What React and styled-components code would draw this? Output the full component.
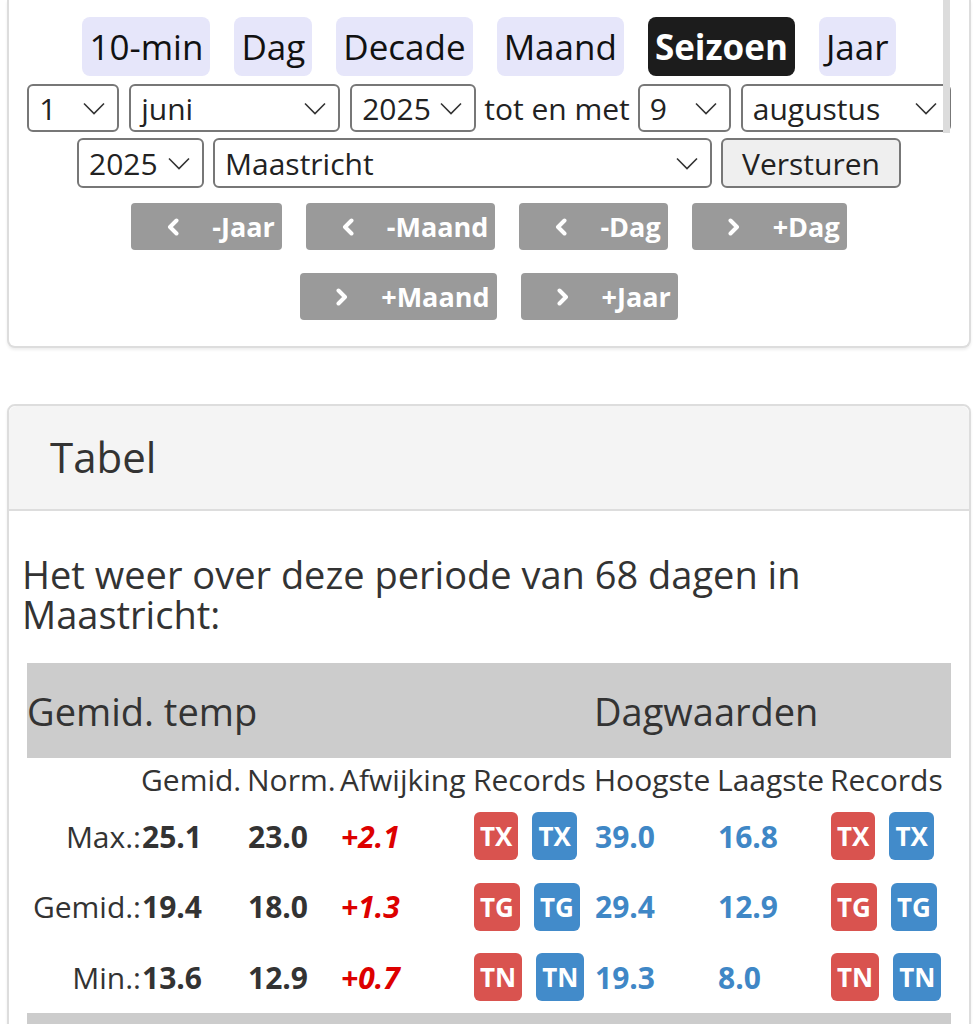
import React from "react";
import styled, { createGlobalStyle } from "styled-components";

const Global = createGlobalStyle`
  html, body { margin: 0; padding: 0; background: #fff; }
  body { font-family: "Open Sans", "Noto Sans", sans-serif; color: #333; }
  * { box-sizing: border-box; }
`;

const Page = styled.div`
  padding: 0 7px;
  display: flex;
  flex-direction: column;
  gap: 56px;
`;

const Card = styled.div`
  position: relative;
  border: 2px solid #ddd;
  border-radius: 8px;
  background: #fff;
  box-shadow: 0 2px 3px rgba(0, 0, 0, 0.07);
  ${(p) => p.$clipTop && `border-top: none; border-radius: 0 0 8px 8px;`}
`;

const Controls = styled.div`
  display: flex;
  flex-direction: column;
  align-items: center;
  padding: 17px 0 26px;
`;

const TabRow = styled.div`
  display: flex;
  justify-content: center;
  gap: 24px;
  height: 59px;
`;

const Tab = styled.span`
  display: flex;
  align-items: center;
  padding: 0 7px;
  border-radius: 8px;
  font-size: 35px;
  background: ${(p) => (p.$active ? "#1c1c1c" : "#e6e6fa")};
  color: ${(p) => (p.$active ? "#fff" : "#111")};
  font-weight: ${(p) => (p.$active ? 700 : 400)};
`;

const FormRow = styled.div`
  display: flex;
  justify-content: center;
  align-items: center;
  gap: ${(p) => p.$gap || 10}px;
  margin-top: ${(p) => p.$mt || 0}px;
  height: ${(p) => p.$h}px;
  width: 100%;
`;

const SelectBox = styled.div`
  flex: none;
  width: ${(p) => p.$w}px;
  height: 100%;
  display: flex;
  align-items: center;
  justify-content: space-between;
  padding: 0 12px 0 10px;
  border: 2px solid #777;
  border-radius: 6px;
  background: #fff;
  font-size: 30px;
  color: #222;
`;

const Between = styled.span`
  font-size: 30px;
  color: #222;
  margin: 0 -2px;
`;

const SubmitButton = styled.div`
  flex: none;
  height: 100%;
  display: flex;
  align-items: center;
  padding: 0 19px;
  border: 2px solid #777;
  border-radius: 6px;
  background: #efefef;
  font-size: 30px;
  color: #222;
`;

const NavRow = styled.div`
  display: flex;
  justify-content: center;
  gap: 24px;
  height: 47px;
  margin-top: ${(p) => p.$mt}px;
`;

const NavButton = styled.div`
  display: flex;
  align-items: center;
  gap: 33px;
  padding: 0 7px 0 36px;
  background: #9a9a9a;
  border-radius: 4px;
  color: #fff;
  font-weight: 700;
  font-size: 27px;
`;

const ScrollThumb = styled.div`
  position: absolute;
  top: 0;
  left: 934px;
  width: 7px;
  height: 133px;
  background: #dcdcdc;
`;

const CardHeader = styled.div`
  background: #f4f4f4;
  border-bottom: 2px solid #ddd;
  border-radius: 8px 8px 0 0;
  padding: 23px 41px 24px;
  font-size: 42px;
  line-height: 56px;
  color: #333;
`;

const CardBody = styled.div`
  padding: 43px 13px 0;
`;

const Intro = styled.p`
  margin: 0 0 29px;
  font-size: 38px;
  line-height: 40px;
  color: #333;
`;

const Table = styled.div`
  margin: 0 5px;
  display: grid;
  grid-template-columns: 114px 106px 93px 133px 121px 123px 113px 1fr;
`;

const GroupHead = styled.div`
  grid-column: ${(p) => p.$col};
  background: #ccc;
  height: 95px;
  display: flex;
  align-items: center;
  font-size: 38px;
  color: #333;
`;

const ColHead = styled.div`
  height: 43px;
  display: flex;
  align-items: center;
  padding-left: 0;
  font-size: 30px;
  color: #333;
  white-space: nowrap;
`;

const Cell = styled.div`
  height: 70.5px;
  display: flex;
  align-items: center;
  justify-content: ${(p) => (p.$right ? "flex-end" : "flex-start")};
  gap: 14px;
  padding: 0 0 0 ${(p) => (p.$right ? 0 : 1)}px;
  font-size: 30px;
  color: ${(p) => p.$color || "#333"};
  font-weight: ${(p) => (p.$bold ? 700 : 400)};
  font-style: ${(p) => (p.$italic ? "italic" : "normal")};
  white-space: nowrap;
`;

const Badge = styled.span`
  display: inline-flex;
  align-items: center;
  height: 48px;
  padding: 0 6px;
  border-radius: 6px;
  background: ${(p) => (p.$kind === "warm" ? "#d9534f" : "#428bca")};
  color: #fff;
  font-weight: 700;
  font-size: 26px;
`;

const Chevron = () => (
  <svg width="22" height="13" viewBox="0 0 22 13" fill="none">
    <polyline points="1,1.5 11,11.5 21,1.5" stroke="#333" strokeWidth="1.6" />
  </svg>
);

const NavChevron = ({ dir }) => (
  <svg width="12" height="18" viewBox="0 0 12 18" fill="none">
    <polyline
      points={dir === "left" ? "9.5,2.5 3,9 9.5,15.5" : "2.5,2.5 9,9 2.5,15.5"}
      stroke="#fff"
      strokeWidth="4"
      strokeLinecap="round"
      strokeLinejoin="round"
    />
  </svg>
);

const Select = ({ w, children }) => (
  <SelectBox $w={w}>
    <span>{children}</span>
    <Chevron />
  </SelectBox>
);

const tabs = ["10-min", "Dag", "Decade", "Maand", "Seizoen", "Jaar"];

const rows = [
  { label: "Max.:", val: "25.1", norm: "23.0", dev: "+2.1", code: "TX", hi: "39.0", lo: "16.8" },
  { label: "Gemid.:", val: "19.4", norm: "18.0", dev: "+1.3", code: "TG", hi: "29.4", lo: "12.9" },
  { label: "Min.:", val: "13.6", norm: "12.9", dev: "+0.7", code: "TN", hi: "19.3", lo: "8.0" },
];

const heads = ["", "Gemid.", "Norm.", "Afwijking", "Records", "Hoogste", "Laagste", "Records"];

export default function App() {
  return (
    <>
      <Global />
      <Page>
        <Card $clipTop>
          <Controls>
            <TabRow>
              {tabs.map((t) => (
                <Tab key={t} $active={t === "Seizoen"}>
                  {t}
                </Tab>
              ))}
            </TabRow>
            <FormRow $h={48} $mt={8}>
              <Select w={92}>1</Select>
              <Select w={211}>juni</Select>
              <Select w={126}>2025</Select>
              <Between>tot en met</Between>
              <Select w={93}>9</Select>
              <Select w={210}>augustus</Select>
            </FormRow>
            <FormRow $h={50} $mt={6} $gap={9}>
              <Select w={127}>2025</Select>
              <Select w={499}>Maastricht</Select>
              <SubmitButton>Versturen</SubmitButton>
            </FormRow>
            <NavRow $mt={15}>
              <NavButton>
                <NavChevron dir="left" />
                -Jaar
              </NavButton>
              <NavButton>
                <NavChevron dir="left" />
                -Maand
              </NavButton>
              <NavButton>
                <NavChevron dir="left" />
                -Dag
              </NavButton>
              <NavButton>
                <NavChevron dir="right" />
                +Dag
              </NavButton>
            </NavRow>
            <NavRow $mt={23}>
              <NavButton>
                <NavChevron dir="right" />
                +Maand
              </NavButton>
              <NavButton>
                <NavChevron dir="right" />
                +Jaar
              </NavButton>
            </NavRow>
          </Controls>
          <ScrollThumb />
        </Card>

        <Card>
          <CardHeader>Tabel</CardHeader>
          <CardBody>
            <Intro>Het weer over deze periode van 68 dagen in Maastricht:</Intro>
            <Table>
              <GroupHead $col="1 / 6">Gemid. temp</GroupHead>
              <GroupHead $col="6 / 9">Dagwaarden</GroupHead>
              {heads.map((h, i) => (
                <ColHead key={i}>{h}</ColHead>
              ))}
              {rows.map((r) => (
                <React.Fragment key={r.code}>
                  <Cell $right>{r.label}</Cell>
                  <Cell $bold>{r.val}</Cell>
                  <Cell $bold>{r.norm}</Cell>
                  <Cell $bold $italic $color="#dd0000">{r.dev}</Cell>
                  <Cell>
                    <Badge $kind="warm">{r.code}</Badge>
                    <Badge $kind="cold">{r.code}</Badge>
                  </Cell>
                  <Cell $bold $color="#3f87c6">{r.hi}</Cell>
                  <Cell $bold $color="#3f87c6">{r.lo}</Cell>
                  <Cell>
                    <Badge $kind="warm">{r.code}</Badge>
                    <Badge $kind="cold">{r.code}</Badge>
                  </Cell>
                </React.Fragment>
              ))}
              <GroupHead $col="1 / 9" />
            </Table>
          </CardBody>
        </Card>
      </Page>
    </>
  );
}
